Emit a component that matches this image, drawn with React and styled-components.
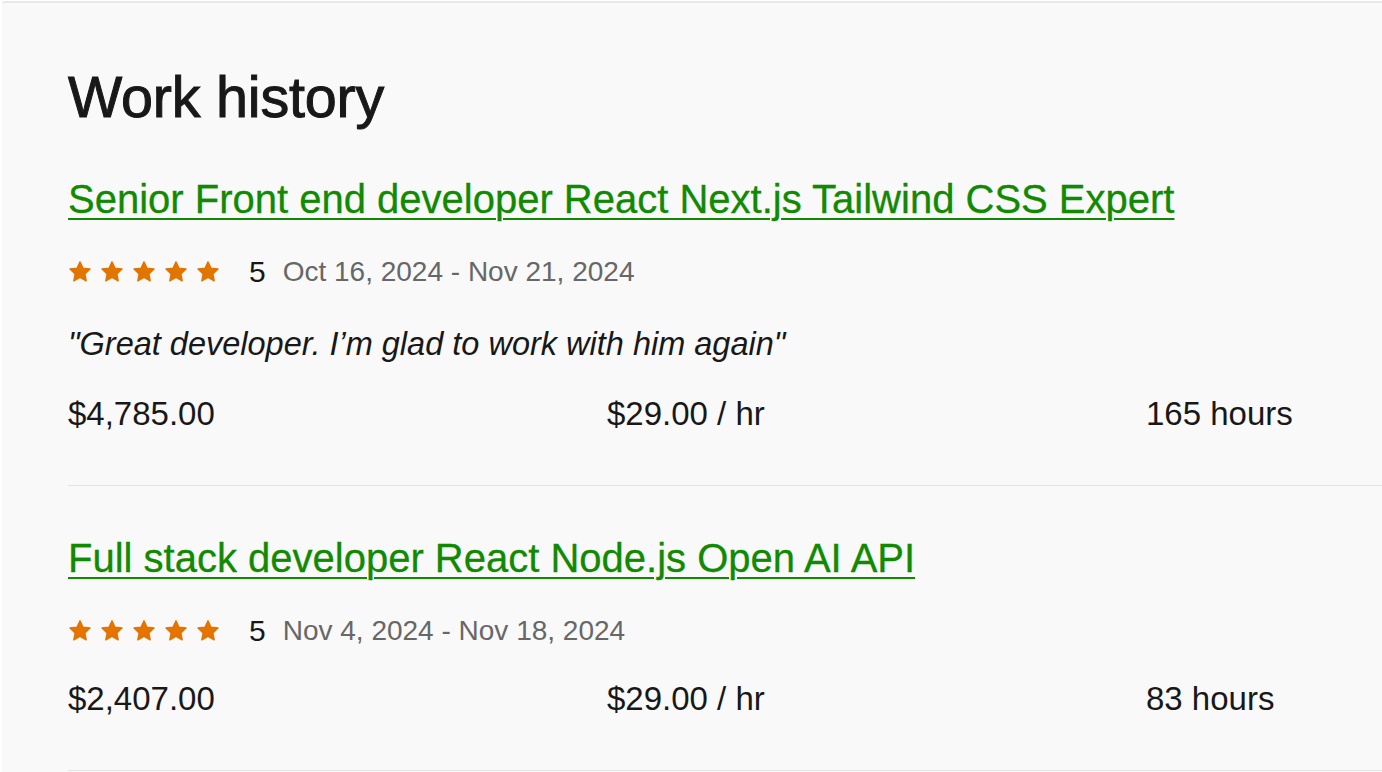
import React from 'react'
import styled, { createGlobalStyle } from 'styled-components';

const GlobalStyle = createGlobalStyle`
    html, body {
        margin: 0;
        padding: 0;
        background: #ffffff;
        overflow: hidden;
    }
    body {
        font-family: "Liberation Sans", Arial, sans-serif;
        color: #181818;
    }
`;

const jobs = [
    {
        title : 'Senior Front end developer React Next.js Tailwind CSS Expert',
        rating : 5,
        dates : 'Oct 16, 2024 - Nov 21, 2024',
        feedback : '"Great developer. I\u2019m glad to work with him again"',
        earned : '$4,785.00',
        rate : '$29.00 / hr',
        hours : '165 hours'
    },
    {
        title : 'Full stack developer React Node.js Open AI API',
        rating : 5,
        dates : 'Nov 4, 2024 - Nov 18, 2024',
        feedback : null,
        earned : '$2,407.00',
        rate : '$29.00 / hr',
        hours : '83 hours'
    }
];

const Star = () => (
    <svg width="24" height="24" viewBox="0 0 24 24">
        <path
            d="M12 1.8l3 6.4 7 .85-5.15 4.85 1.35 6.95L12 17.45l-6.2 3.4 1.35-6.95L2 9.05l7-.85z"
            fill="#e37400"
            stroke="#e37400"
            strokeWidth="1.4"
            strokeLinejoin="round"
        />
    </svg>
);

const WorkHistory = () => (
    <Section>
        <Heading>Work history</Heading>
        {jobs.map((job, i) => (
            <Job key={i}>
                <JobTitle href="#">{job.title}</JobTitle>
                <Meta>
                    <Stars>
                        {[0,1,2,3,4].map(s => <Star key={s}/>)}
                    </Stars>
                    <Score>{job.rating}</Score>
                    <Dates>{job.dates}</Dates>
                </Meta>
                {job.feedback && <Feedback>{job.feedback}</Feedback>}
                <Stats>
                    <Stat>{job.earned}</Stat>
                    <Stat>{job.rate}</Stat>
                    <Stat>{job.hours}</Stat>
                </Stats>
            </Job>
        ))}
    </Section>
);

export default function App() {
    return (
        <>
            <GlobalStyle/>
            <WorkHistory/>
        </>
    );
}

const Section = styled.section`
    box-sizing: border-box;
    margin: 1px 0 0 2px;
    min-height: 771px;
    background-color: #f9f9f9;
    border-top: 2px solid #e9e9e9;
    border-top-left-radius: 3px;
    padding: 64px 0 0 66px;
    overflow: hidden;
`;

const Heading = styled.h2`
    margin: 0;
    font-size: 57.5px;
    line-height: 60px;
    font-weight: 400;
    letter-spacing: -0.2px;
    -webkit-text-stroke: 1px #181818;
    color: #181818;
`;

const Job = styled.div`
    padding: 46px 0 51px;
    border-bottom: 1px solid #e4e4e4;
`;

const JobTitle = styled.a`
    display: block;
    font-size: 40px;
    line-height: 52px;
    color: #108a00;
    -webkit-text-stroke: 0.3px #108a00;
    text-decoration: underline;
    text-decoration-thickness: 2px;
    text-underline-offset: 5px;
    white-space: nowrap;
`;

const Meta = styled.div`
    display: flex;
    align-items: center;
    margin-top: 29px;
    height: 36px;
`;

const Stars = styled.div`
    display: flex;
    gap: 8px;
    margin-right: 29px;
`;

const Score = styled.span`
    font-size: 30px;
    line-height: 36px;
    color: #181818;
    margin-right: 17px;
`;

const Dates = styled.span`
    font-size: 28px;
    line-height: 36px;
    color: #676767;
`;

const Feedback = styled.p`
    margin: 34px 0 0;
    font-size: 32.5px;
    line-height: 40px;
    font-style: italic;
    color: #181818;
`;

const Stats = styled.div`
    display: grid;
    grid-template-columns: repeat(3, 539px);
    margin-top: 30px;
`;

const Stat = styled.div`
    font-size: 33px;
    line-height: 40px;
    color: #181818;
    white-space: nowrap;
`;
